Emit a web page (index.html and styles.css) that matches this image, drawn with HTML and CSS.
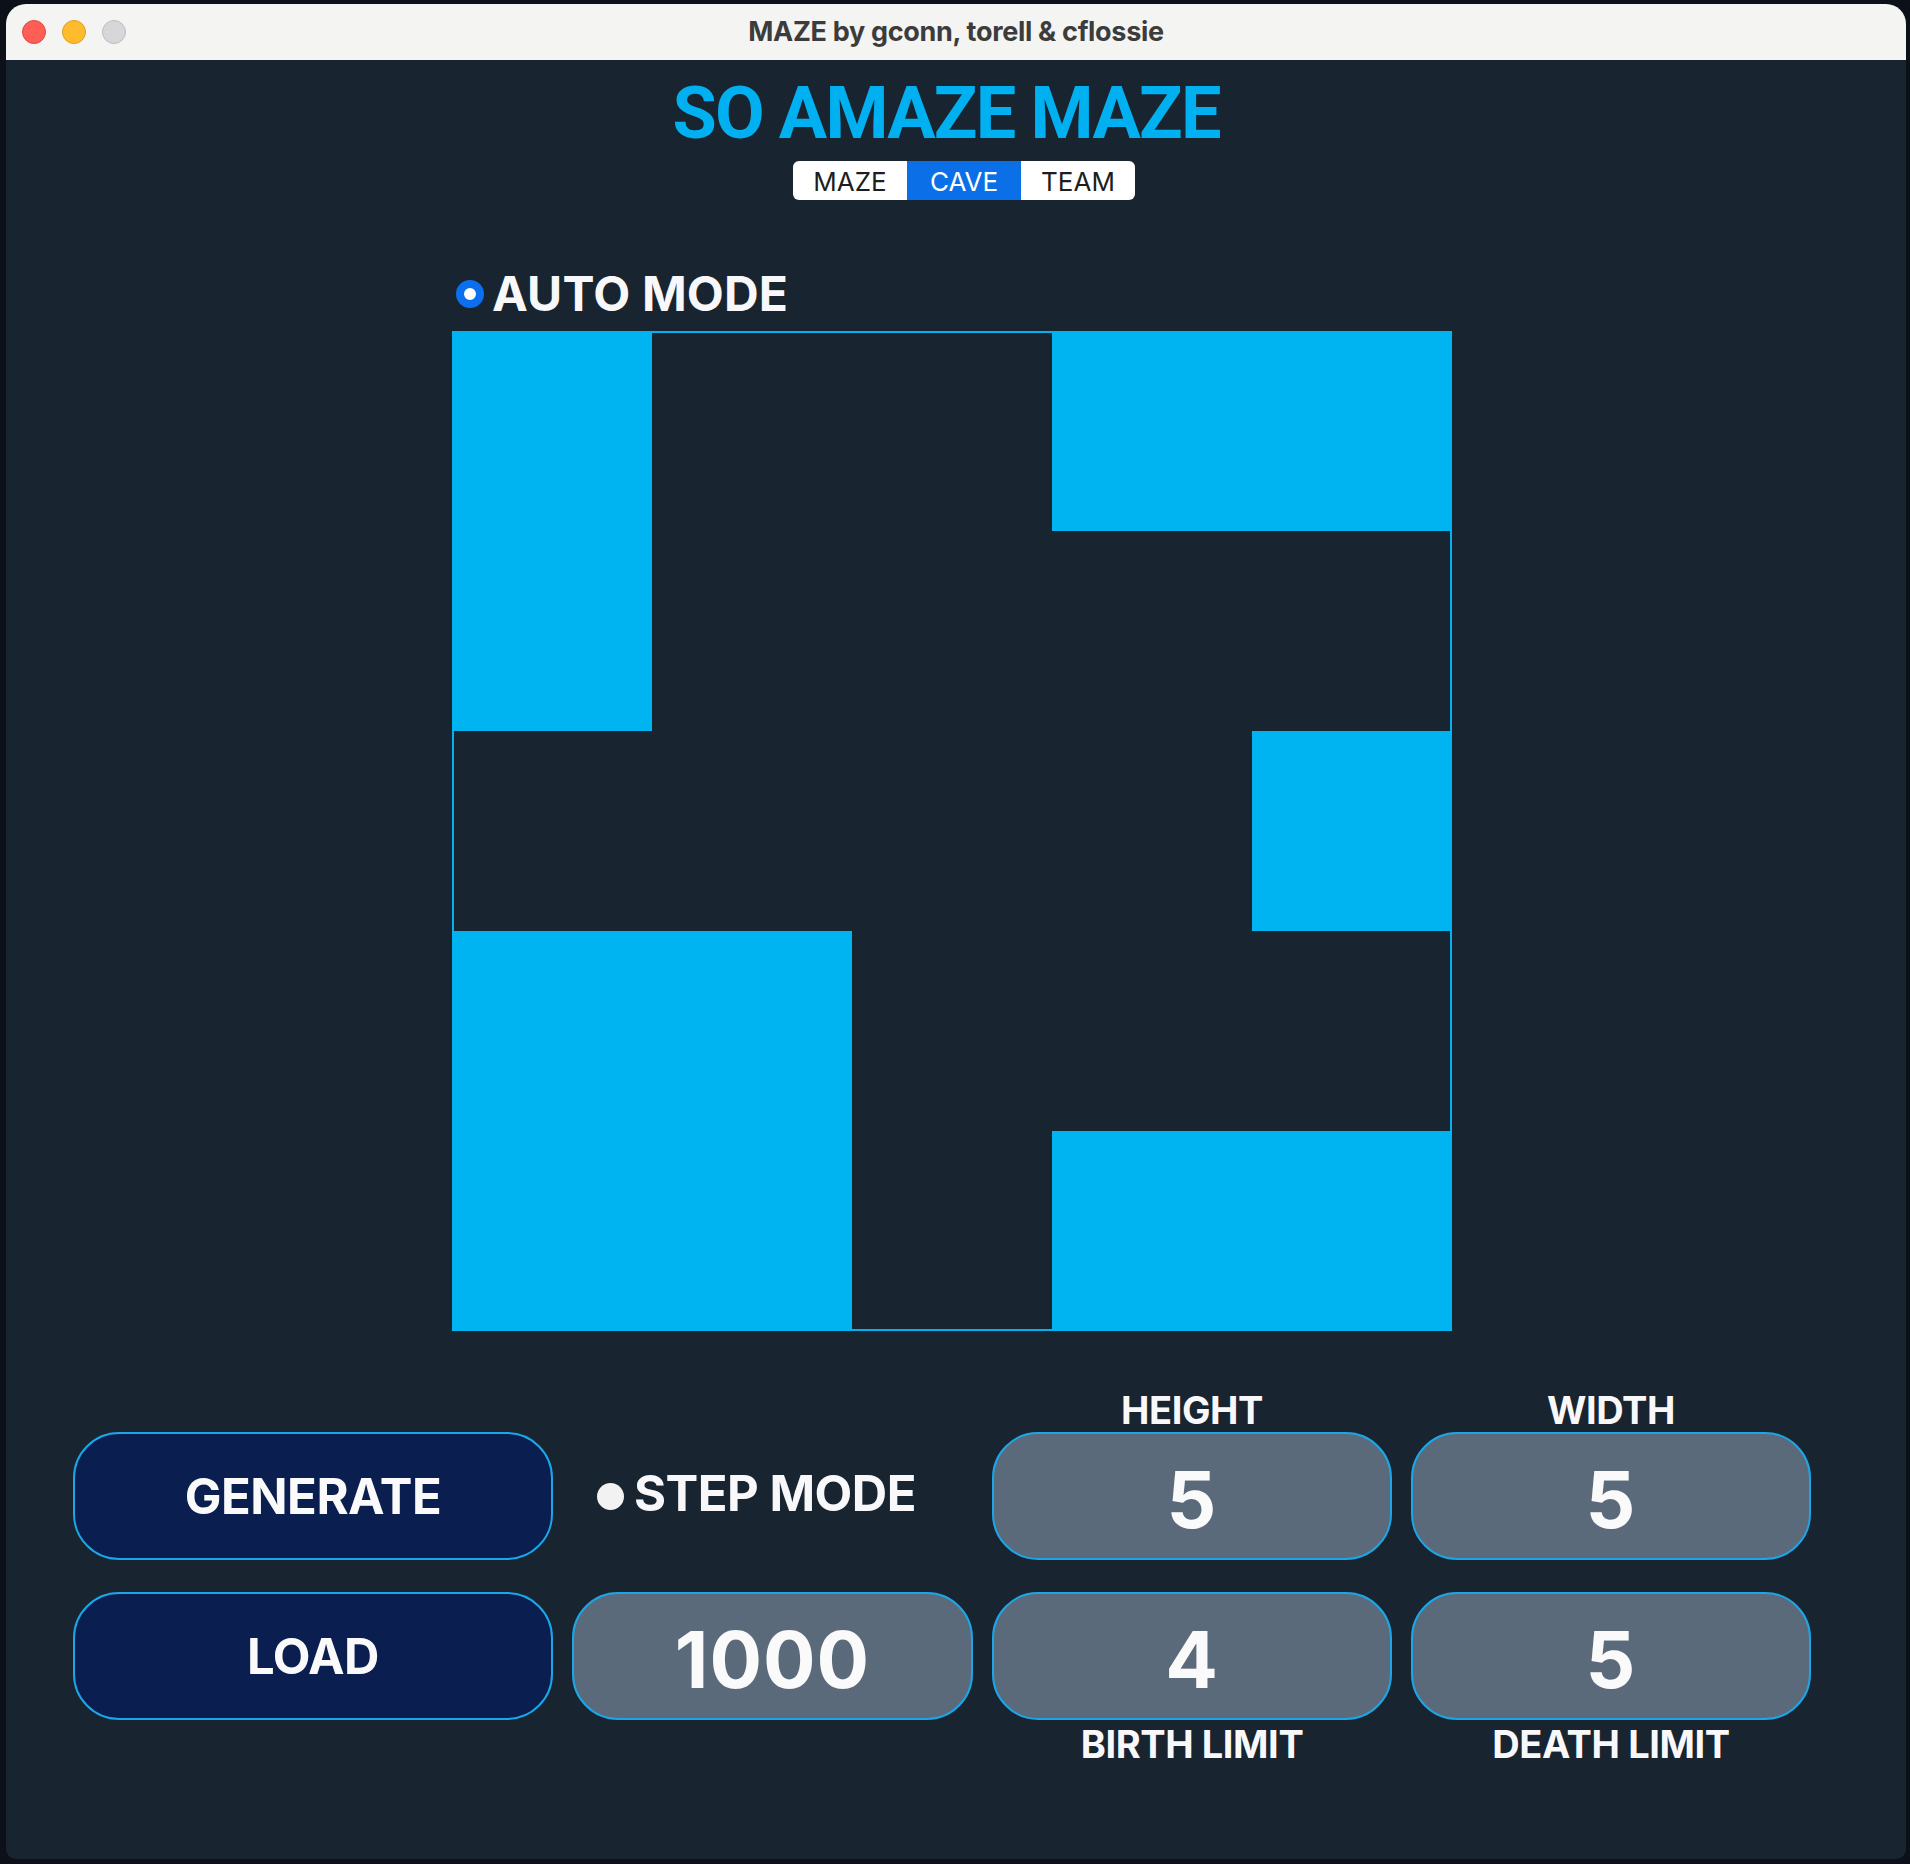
FILE: index.html
```html
<!DOCTYPE html>
<html lang="en">
<head>
<meta charset="utf-8">
<title>MAZE by gconn, torell &amp; cflossie</title>
<link rel="stylesheet" href="styles.css">
</head>
<body>
<div class="window">
  <div class="titlebar">
    <div class="lights">
      <span class="light red"></span>
      <span class="light yellow"></span>
      <span class="light gray"></span>
    </div>
    <div class="title">MAZE by gconn, torell &amp; cflossie</div>
    <div class="spacer"></div>
  </div>
  <div class="content">
    <h1 class="heading">SO AMAZE MAZE</h1>
    <div class="tabs-row">
      <div class="tabs">
        <span class="tab">MAZE</span>
        <span class="tab active">CAVE</span>
        <span class="tab">TEAM</span>
      </div>
    </div>
    <div class="stage">
      <div class="mode-row">
        <span class="radio on"></span>
        <span class="mode-label">AUTO MODE</span>
      </div>
      <div class="cave">
        <div class="cell on"></div><div class="cell"></div><div class="cell"></div><div class="cell on"></div><div class="cell on"></div>
        <div class="cell on"></div><div class="cell"></div><div class="cell"></div><div class="cell"></div><div class="cell"></div>
        <div class="cell"></div><div class="cell"></div><div class="cell"></div><div class="cell"></div><div class="cell on"></div>
        <div class="cell on"></div><div class="cell on"></div><div class="cell"></div><div class="cell"></div><div class="cell"></div>
        <div class="cell on"></div><div class="cell on"></div><div class="cell"></div><div class="cell on"></div><div class="cell on"></div>
      </div>
    </div>
    <div class="controls">
      <div class="label c3 r1">HEIGHT</div>
      <div class="label c4 r1">WIDTH</div>
      <div class="btn c1 r2">GENERATE</div>
      <div class="step c2 r2"><span class="radio off"></span><span class="step-label">STEP MODE</span></div>
      <div class="field c3 r2">5</div>
      <div class="field c4 r2">5</div>
      <div class="btn c1 r4">LOAD</div>
      <div class="field c2 r4">1000</div>
      <div class="field c3 r4">4</div>
      <div class="field c4 r4">5</div>
      <div class="label low c3 r5">BIRTH LIMIT</div>
      <div class="label low c4 r5">DEATH LIMIT</div>
    </div>
  </div>
</div>
</body>
</html>
```

FILE: styles.css
```css
html, body {
  margin: 0;
  padding: 0;
  background: #0c1018;
}

body {
  font-family: Inter, "Noto Sans", sans-serif;
  width: 1910px;
  height: 1864px;
  overflow: hidden;
}

.window {
  margin: 4px 0 0 6px;
  width: 1900px;
  height: 1855px;
  border-radius: 20px 20px 10px 10px;
  overflow: hidden;
  background: #18242f;
  display: flex;
  flex-direction: column;
}

.titlebar {
  height: 56px;
  flex: none;
  background: #f4f4f3;
  display: grid;
  grid-template-columns: 1fr auto 1fr;
  align-items: center;
}

.lights {
  display: flex;
  gap: 16px;
  padding-left: 16px;
  margin-top: -1px;
}

.light {
  width: 24px;
  height: 24px;
  border-radius: 50%;
  box-sizing: border-box;
}

.light.red { background: #fe5e56; border: 1px solid #e14640; }
.light.yellow { background: #febb2e; border: 1px solid #df9f1e; }
.light.gray { background: #d7d7d9; border: 1px solid #bdbdc0; }

.title {
  font-weight: 700;
  font-size: 27px;
  color: #3c3c3c;
  letter-spacing: -0.3px;
  margin-top: -2px;
}

.content {
  flex: 1;
  display: flex;
  flex-direction: column;
}

.heading {
  margin: 19px 20px 0 0;
  font-family: Roboto, Inter, sans-serif;
  font-size: 72px;
  line-height: 70px;
  font-weight: 700;
  color: #00b0f0;
  text-align: center;
  letter-spacing: -1.8px;
}

.tabs-row {
  margin-top: 12px;
  display: flex;
  justify-content: center;
  padding-left: 16px;
}

.tabs {
  display: flex;
  height: 39px;
  background: #ffffff;
  border-radius: 6px;
  overflow: hidden;
}

.tab {
  width: 114px;
  display: flex;
  align-items: center;
  justify-content: center;
  font-size: 26px;
  color: #1e1e1e;
  padding-top: 1px;
}

.tab.active {
  background: #0b6fe8;
  color: #ffffff;
}

.stage {
  margin-left: 446px;
  width: 1000px;
}

.mode-row {
  margin-top: 70px;
  height: 48px;
  display: flex;
  align-items: center;
  padding-left: 4px;
  gap: 8px;
}

.radio {
  width: 28px;
  height: 28px;
  border-radius: 50%;
  box-sizing: border-box;
  flex: none;
}

.radio.on {
  background: #ffffff;
  border: 8px solid #0b6ff0;
}

.radio.off {
  width: 27px;
  height: 27px;
  background: #f2f2f2;
}

.mode-label {
  font-size: 48px;
  line-height: 48px;
  font-weight: 700;
  color: #f8f8fa;
  letter-spacing: 0.2px;
}

.cave {
  margin-top: 13px;
  width: 1000px;
  height: 1000px;
  display: grid;
  grid-template-columns: repeat(5, 200px);
  grid-template-rows: repeat(5, 200px);
  box-shadow: inset 0 0 0 2px #00b3f0;
}

.cell.on {
  background: #00b4f2;
}

.controls {
  margin: 57px 0 0 67px;
  display: grid;
  grid-template-columns: 480px 401px 400px 400px;
  grid-template-rows: 44px 128px 32px 128px 44px;
  column-gap: 19px;
}

.c1 { grid-column: 1; }
.c2 { grid-column: 2; }
.c3 { grid-column: 3; }
.c4 { grid-column: 4; }
.r1 { grid-row: 1; }
.r2 { grid-row: 2; }
.r4 { grid-row: 4; }
.r5 { grid-row: 5; }

.label {
  font-size: 38px;
  line-height: 44px;
  font-weight: 700;
  color: #f8f8fa;
  text-align: center;
  letter-spacing: -0.4px;
}

.label.low {
  padding-top: 2px;
}

.btn, .field {
  box-sizing: border-box;
  border: 2px solid #1ba6e8;
  border-radius: 46px;
  display: flex;
  align-items: center;
  justify-content: center;
  color: #fafafa;
  font-weight: 700;
}

.btn {
  background: #0a1e50;
  font-size: 49px;
  letter-spacing: -0.5px;
}

.field {
  background: #5a6a7a;
  font-size: 78px;
  padding-top: 6px;
  letter-spacing: 1px;
}

.step {
  display: flex;
  align-items: center;
  padding-left: 25px;
  gap: 10px;
}

.step-label {
  font-size: 49px;
  font-weight: 700;
  color: #f8f8fa;
  letter-spacing: -0.5px;
  margin-top: -6px;
}
```
